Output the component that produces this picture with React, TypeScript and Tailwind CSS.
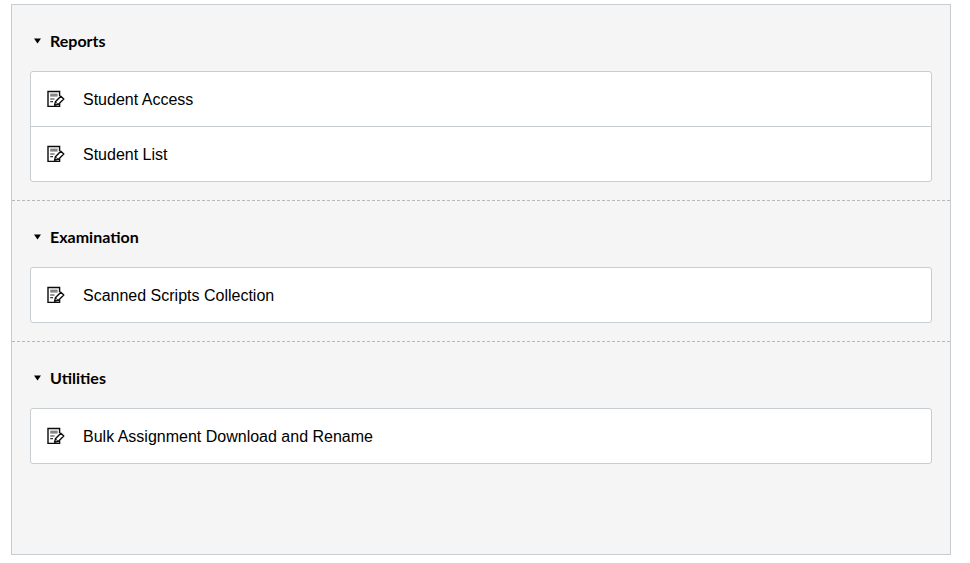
import { type ReactNode } from 'react';

const sections = [
  { title: 'Reports', items: ['Student Access', 'Student List'] },
  { title: 'Examination', items: ['Scanned Scripts Collection'] },
  { title: 'Utilities', items: ['Bulk Assignment Download and Rename'] },
];

const AssignmentIcon = () => (
  <svg width="18" height="18" viewBox="0 0 18 18" fill="none" className="shrink-0">
    <path d="M12.6 6V1.5H1V16.4H12.6V13.5" stroke="#0b0b0b" strokeWidth="1.4" />
    <rect x="3.2" y="3.6" width="7.4" height="3" fill="#858585" />
    <path d="M3.2 9H7.5M3.2 11.6H6" stroke="#333" strokeWidth="1.2" />
    <path d="M7.6 15.2L8.4 11.8L13.8 6.2L16.8 9L11.2 14.4L7.6 15.2Z" fill="#fff" stroke="#0b0b0b" strokeWidth="1.4" strokeLinejoin="round" />
    <path d="M8.4 11.8L11.2 14.4" stroke="#0b0b0b" strokeWidth="1" />
  </svg>
);

const Row = ({ children, last }: { children: ReactNode; last: boolean }) => (
  <div className={`flex items-center pl-[16px] ${last ? 'h-[54px]' : 'h-[55px] border-b border-[#c7cdd1]'}`}>
    <AssignmentIcon />
    <span className="ml-[18px] pt-[2px] text-[16px] text-black">{children}</span>
  </div>
);

export default function App() {
  return (
    <div className="h-[563px] w-[970px] bg-white pt-[4px] pl-[11px] font-['Liberation_Sans',Arial,sans-serif]">
      <div className="h-[551px] w-[940px] border border-[#c7cdd1] bg-[#f5f5f5]">
        {sections.map((section, i) => (
          <div
            key={section.title}
            className={`px-[18px] pt-[24px] pb-[18px] ${i < sections.length - 1 ? 'border-b border-dashed border-[#b5b9bc]' : ''}`}
          >
            <div className="flex h-[24px] items-center pl-[4px]">
              <svg width="7" height="6" viewBox="0 0 7 6" className="shrink-0">
                <path d="M0 0.5H7L3.5 5.5Z" fill="#000" />
              </svg>
              <span className="ml-[9px] font-['Lato',sans-serif] text-[16px] font-bold text-black">{section.title}</span>
            </div>
            <div className="mt-[18px] rounded-[3px] border border-[#c7cdd1] bg-white">
              {section.items.map((item, j) => (
                <Row key={item} last={j === section.items.length - 1}>
                  {item}
                </Row>
              ))}
            </div>
          </div>
        ))}
      </div>
    </div>
  );
}
